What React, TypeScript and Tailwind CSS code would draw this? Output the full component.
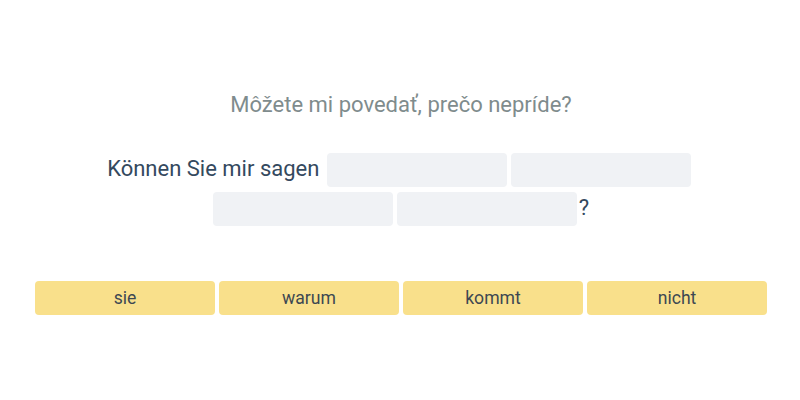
const words = ["sie", "warum", "kommt", "nicht"];

export default function App() {
  return (
    <div className="h-[400px] w-full bg-white font-['Roboto',sans-serif] flex flex-col items-center pt-[90px]">
      <h1 className="text-[22px] leading-[30px] text-[#7f8c8d] ml-[2px]">Môžete mi povedať, prečo nepríde?</h1>

      <div className="mt-[29px] w-[640px] text-center text-[22px] leading-[39px] text-[#34495e]">
        Können Sie mir sagen{" "}
        <span className="inline-block align-middle w-[180px] h-[34px] mx-[2px] rounded bg-[#f0f2f5]" />
        <span className="inline-block align-middle w-[180px] h-[34px] mx-[2px] rounded bg-[#f0f2f5]" />
        <span className="inline-block align-middle w-[180px] h-[34px] mx-[2px] rounded bg-[#f0f2f5]" />
        <span className="inline-block align-middle w-[180px] h-[34px] mx-[2px] rounded bg-[#f0f2f5]" />
        ?
      </div>

      <div className="mt-[54px] ml-[2px] flex gap-1">
        {words.map((w) => (
          <button
            key={w}
            className="w-[180px] h-[34px] rounded bg-[#f9e08b] text-[17.6px] text-[#3d4852]"
          >
            {w}
          </button>
        ))}
      </div>
    </div>
  );
}
